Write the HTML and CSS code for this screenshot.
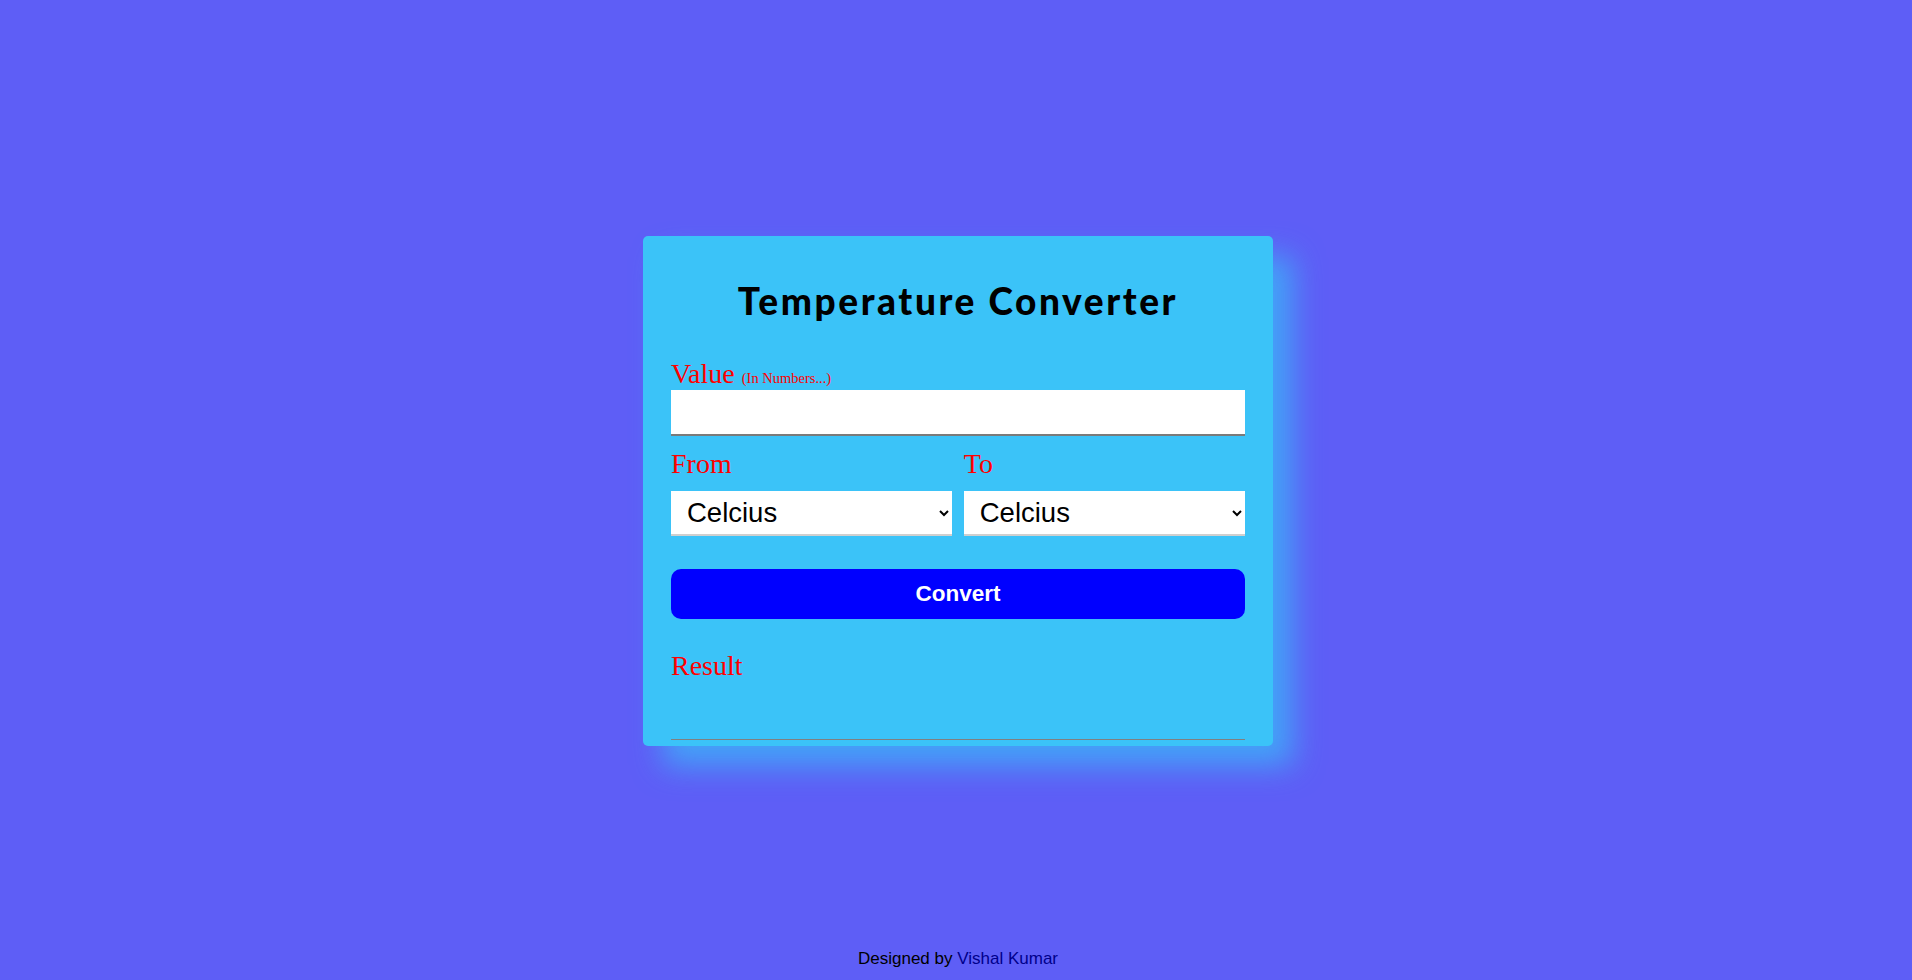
FILE: index.html
```html
<!DOCTYPE html>
<html lang="en">
<head>
<meta charset="utf-8">
<title>Temperature Converter</title>
<link rel="stylesheet" href="styles.css">
</head>
<body>
  <div class="spacer"></div>
  <main class="card">
    <h1 class="title">Temperature Converter</h1>
    <label class="label" for="value">Value <span class="hint">(In Numbers...)</span></label>
    <input class="field" id="value" type="text">
    <div class="row">
      <div class="col">
        <label class="label" for="from">From</label>
        <select class="select" id="from">
          <option>Celcius</option>
          <option>Fahrenheit</option>
          <option>Kelvin</option>
        </select>
      </div>
      <div class="col">
        <label class="label" for="to">To</label>
        <select class="select" id="to">
          <option>Celcius</option>
          <option>Fahrenheit</option>
          <option>Kelvin</option>
        </select>
      </div>
    </div>
    <button class="btn" type="button">Convert</button>
    <div class="label result-label">Result</div>
    <div class="result"></div>
  </main>
  <footer class="footer">Designed by <a class="link" href="#">Vishal Kumar</a></footer>
</body>
</html>
```
FILE: styles.css
```css
html, body {
  margin: 0;
  height: 100%;
}
body {
  box-sizing: border-box;
  padding: 2px 0 0 4px;
  background: #5e5ef6;
  display: grid;
  grid-template-rows: 1fr auto 1fr;
  justify-items: center;
  font-family: "Liberation Sans", Arial, sans-serif;
}
.card {
  box-sizing: border-box;
  width: 630px;
  height: 510px;
  padding: 43px 28px 6px;
  background: #3bc3f8;
  border-radius: 5px;
  box-shadow: 20px 20px 30px rgba(56, 193, 248, 0.7);
  display: flex;
  flex-direction: column;
}
.title {
  margin: 0 0 35px;
  text-align: center;
  font-family: "Lato", "DejaVu Sans", sans-serif;
  font-weight: 900;
  font-size: 37px;
  line-height: 44px;
  letter-spacing: 2.6px;
  color: #000;
}
.label {
  display: block;
  font-family: "Liberation Serif", "Times New Roman", serif;
  font-size: 28px;
  line-height: 32px;
  color: #ff0000;
}
.hint {
  font-size: 14.5px;
  line-height: 1;
}
.field {
  box-sizing: border-box;
  width: 100%;
  height: 46px;
  margin: 0;
  border: none;
  border-bottom: 2px solid #7a7a7a;
  background: #fff;
  font-size: 24px;
  padding: 0 12px;
  outline: none;
}
.row {
  margin-top: 12px;
  display: flex;
  justify-content: space-between;
}
.col {
  width: 49%;
  display: flex;
  flex-direction: column;
}
.select {
  box-sizing: border-box;
  margin-top: 11px;
  width: 100%;
  height: 45px;
  border: none;
  border-bottom: 2px solid #cfcfcf;
  border-radius: 0;
  background: #fff;
  color: #000;
  font-family: "Liberation Sans", Arial, sans-serif;
  font-size: 27.5px;
  padding: 0 8px 0 12px;
  outline: none;
}
.btn {
  flex: none;
  margin-top: 33px;
  height: 50px;
  width: 100%;
  border: none;
  border-radius: 10px;
  background: #0000ff;
  color: #fff;
  font-family: "Liberation Sans", Arial, sans-serif;
  font-weight: bold;
  font-size: 22.5px;
  padding: 0;
}
.result-label {
  margin-top: 31px;
}
.result {
  flex: none;
  box-sizing: border-box;
  height: 58px;
  border-bottom: 1px solid #808080;
}
.footer {
  align-self: end;
  padding-bottom: 11px;
  font-size: 17px;
  color: #000;
}
.link {
  color: #00008b;
  text-decoration: none;
}
```
